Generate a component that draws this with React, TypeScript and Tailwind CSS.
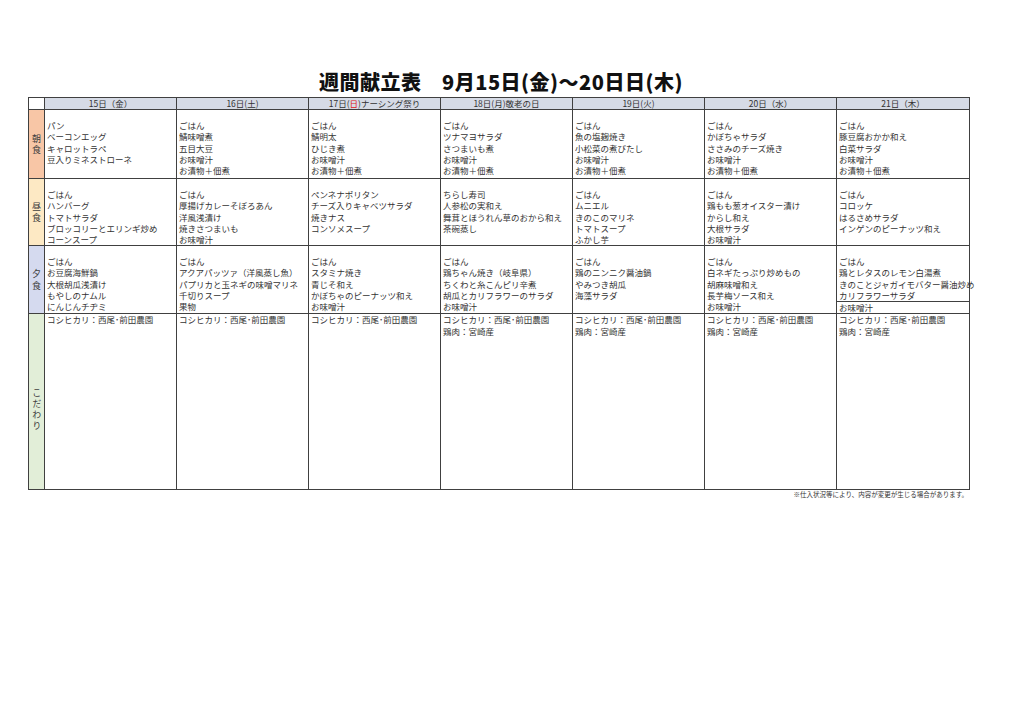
import React from 'react';

const FONT = '"Noto Sans CJK JP", "Noto Sans", sans-serif';

const DAYS: { label: React.ReactNode }[] = [
    { label: '15日（金）' },
    { label: '16日(土)' },
    { label: <>17日(<span className="text-[#e02020]">日</span>)ナーシング祭り</> },
    { label: '18日(月)敬老の日' },
    { label: '19日(火)' },
    { label: '20日（水）' },
    { label: '21日（木）' },
];

const BREAKFAST = [
    ['パン', 'ベーコンエッグ', 'キャロットラペ', '豆入りミネストローネ'],
    ['ごはん', '鯖味噌煮', '五目大豆', 'お味噌汁', 'お漬物＋佃煮'],
    ['ごはん', '鯖明太', 'ひじき煮', 'お味噌汁', 'お漬物＋佃煮'],
    ['ごはん', 'ツナマヨサラダ', 'さつまいも煮', 'お味噌汁', 'お漬物＋佃煮'],
    ['ごはん', '魚の塩麹焼き', '小松菜の煮びたし', 'お味噌汁', 'お漬物＋佃煮'],
    ['ごはん', 'かぼちゃサラダ', 'ささみのチーズ焼き', 'お味噌汁', 'お漬物＋佃煮'],
    ['ごはん', '豚豆腐おかか和え', '白菜サラダ', 'お味噌汁', 'お漬物＋佃煮'],
];

const LUNCH = [
    ['ごはん', 'ハンバーグ', 'トマトサラダ', 'ブロッコリーとエリンギ炒め', 'コーンスープ'],
    ['ごはん', '厚揚げカレーそぼろあん', '洋風浅漬け', '焼きさつまいも', 'お味噌汁'],
    ['ペンネナポリタン', 'チーズ入りキャベツサラダ', '焼きナス', 'コンソメスープ'],
    ['ちらし寿司', '人参松の実和え', '舞茸とほうれん草のおから和え', '茶碗蒸し'],
    ['ごはん', 'ムニエル', 'きのこのマリネ', 'トマトスープ', 'ふかし芋'],
    ['ごはん', '鶏もも葱オイスター漬け', 'からし和え', '大根サラダ', 'お味噌汁'],
    ['ごはん', 'コロッケ', 'はるさめサラダ', 'インゲンのピーナッツ和え'],
];

const DINNER = [
    ['ごはん', 'お豆腐海鮮鍋', '大根胡瓜浅漬け', 'もやしのナムル', 'にんじんチヂミ'],
    ['ごはん', 'アクアパッツァ（洋風蒸し魚）', 'パプリカと玉ネギの味噌マリネ', '千切りスープ', '果物'],
    ['ごはん', 'スタミナ焼き', '青じそ和え', 'かぼちゃのピーナッツ和え', 'お味噌汁'],
    ['ごはん', '鶏ちゃん焼き（岐阜県）', 'ちくわと糸こんピリ辛煮', '胡瓜とカリフラワーのサラダ', 'お味噌汁'],
    ['ごはん', '鶏のニンニク醤油鍋', 'やみつき胡瓜', '海藻サラダ'],
    ['ごはん', '白ネギたっぷり炒めもの', '胡麻味噌和え', '長芋梅ソース和え', 'お味噌汁'],
    ['ごはん', '鶏とレタスのレモン白湯煮', 'きのことジャガイモバター醤油炒め', 'カリフラワーサラダ', 'お味噌汁'],
];

const KODAWARI = [
    ['コシヒカリ：西尾･前田農園'],
    ['コシヒカリ：西尾･前田農園'],
    ['コシヒカリ：西尾･前田農園'],
    ['コシヒカリ：西尾･前田農園', '鶏肉：宮崎産'],
    ['コシヒカリ：西尾･前田農園', '鶏肉：宮崎産'],
    ['コシヒカリ：西尾･前田農園', '鶏肉：宮崎産'],
    ['コシヒカリ：西尾･前田農園', '鶏肉：宮崎産'],
];

const MealLabel = ({ text, bg }: { text: string; bg: string }) => (
    <div className={`border-r border-[#404040] ${bg} flex flex-col items-center justify-center text-[9px] leading-[11.5px] text-[#404040]`}>
        {text.split('').map((c, i) => <span key={i}>{c}</span>)}
    </div>
);

const MealRow = ({ label, bg, data, height }: { label: string; bg: string; data: string[][]; height: string }) => (
    <div className={`grid grid-cols-[16px_repeat(7,minmax(0,1fr))] ${height} border-b border-[#404040]`}>
        <MealLabel text={label} bg={bg} />
        {data.map((lines, i) => (
            <div key={i} className={`flex flex-col pt-[10px] pl-[2px] text-[8.5px] leading-[11.3px] text-[#333] ${i < 6 ? 'border-r border-[#404040]' : ''}`}>
                {lines.map((l, j) => {
                    const ruled = label === '夕食' && i === 6 && j === 4;
                    return (
                        <div key={j} className={`whitespace-nowrap ${ruled ? 'border-t border-[#404040] -ml-[2px] pl-[2px]' : ''}`}>{l}</div>
                    );
                })}
            </div>
        ))}
    </div>
);

export default function App() {
    return (
        <div className="w-[1024px] h-[724px] bg-white" style={{ fontFamily: FONT }}>
            <div className="pt-[69px] h-[97px] flex justify-center">
                <h1 className="text-[20px] leading-[26px] font-black text-[#111] pr-[22px] tracking-[0.5px]">週間献立表　9月15日(金)～20日日(木)</h1>
            </div>
            <div className="ml-[28px] w-[942px] border border-[#404040]">
                <div className="grid grid-cols-[16px_repeat(7,minmax(0,1fr))] h-[12px] border-b border-[#404040]">
                    <div className="border-r border-[#404040] bg-white" />
                    {DAYS.map((d, i) => (
                        <div key={i} className={`bg-[#d6dbe6] text-center text-[8.5px] leading-[11px] text-[#333] ${i < 6 ? 'border-r border-[#404040]' : ''}`}>{d.label}</div>
                    ))}
                </div>
                <MealRow label="朝食" bg="bg-[#f8c6a6]" data={BREAKFAST} height="h-[69px]" />
                <MealRow label="昼食" bg="bg-[#fde9c4]" data={LUNCH} height="h-[67px]" />
                <MealRow label="夕食" bg="bg-[#d5daef]" data={DINNER} height="h-[68px]" />
                <div className="grid grid-cols-[16px_repeat(7,minmax(0,1fr))] h-[175px]">
                    <div className="border-r border-[#404040] bg-[#e2eed8] flex items-center justify-center pt-[16px]">
                        <span className="text-[9px] tracking-[2px] text-[#404040] [writing-mode:vertical-rl]">こだわり</span>
                    </div>
                    {KODAWARI.map((lines, i) => (
                        <div key={i} className={`flex flex-col pl-[2px] text-[8.5px] leading-[11.6px] text-[#333] ${i < 6 ? 'border-r border-[#404040]' : ''}`}>
                            {lines.map((l, j) => <div key={j} className="whitespace-nowrap">{l}</div>)}
                        </div>
                    ))}
                </div>
            </div>
            <div className="w-[970px] text-right text-[6.5px] leading-[9px] text-[#333] pr-[2px]">※仕入状況等により、内容が変更が生じる場合があります。</div>
        </div>
    );
}
